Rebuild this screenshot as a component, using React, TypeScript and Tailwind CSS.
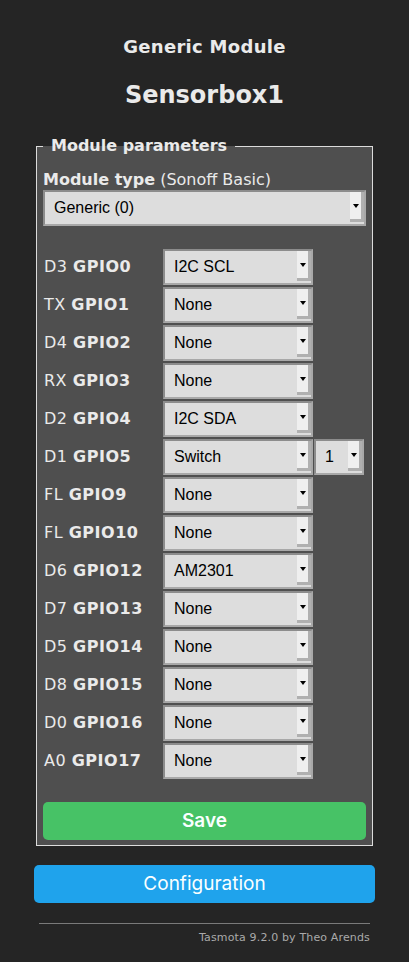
import React from 'react';

const rows: [string, string, string, string?][] = [
  ['D3', 'GPIO0', 'I2C SCL'],
  ['TX', 'GPIO1', 'None'],
  ['D4', 'GPIO2', 'None'],
  ['RX', 'GPIO3', 'None'],
  ['D2', 'GPIO4', 'I2C SDA'],
  ['D1', 'GPIO5', 'Switch', '1'],
  ['FL', 'GPIO9', 'None'],
  ['FL', 'GPIO10', 'None'],
  ['D6', 'GPIO12', 'AM2301'],
  ['D7', 'GPIO13', 'None'],
  ['D5', 'GPIO14', 'None'],
  ['D8', 'GPIO15', 'None'],
  ['D0', 'GPIO16', 'None'],
  ['A0', 'GPIO17', 'None'],
];

function Select({ value, className = '' }: { value: string; className?: string }) {
  return (
    <div
      className={`flex h-[36px] items-stretch border-2 border-t-[#8c8c8c] border-l-[#8c8c8c] border-r-[#a8a8a8] border-b-[#a8a8a8] bg-[#dddddd] text-[16px] text-black font-['Liberation_Sans',Arial,sans-serif] ${className}`}
    >
      <span className="flex flex-1 items-center pl-[9px]">{value}</span>
      <span className="mb-[2px] flex w-[14px] items-center justify-center border-r-[3px] border-b-[3px] border-[#b0b0b0] bg-[#efefef]">
        <span className="h-0 w-0 border-x-[3px] border-t-[4px] border-x-transparent border-t-black" />
      </span>
    </div>
  );
}

export default function App() {
  return (
    <div className="min-h-screen bg-[#252525] pt-[36px] pb-[20px] text-[#eaeaea] font-['DejaVu_Sans',Verdana,sans-serif]">
      <div className="mx-auto w-[341px]">
        <h3 className="text-center text-[18px] font-bold leading-[22px] tracking-[0.3px]">Generic Module</h3>
        <h2 className="mt-[23px] text-center text-[24px] font-bold leading-[28px]">Sensorbox1</h2>

        <fieldset className="mx-[2px] mt-[27px] border border-[#dcdcdc] bg-[#4f4f4f] px-[6px] pb-[5px]">
          <legend className="px-[8px] text-[16px] font-bold leading-[20px]">Module parameters</legend>

          <p className="mt-[14px] text-[16px] leading-[20px]">
            <b>Module type</b> (Sonoff Basic)
          </p>
          <Select value="Generic (0)" />

          <div className="mt-[23px] flex flex-col gap-[2px]">
            {rows.map(([pin, gpio, fn, extra]) => (
              <div key={gpio} className="flex items-center">
                <span className="w-[120px] pl-[1px] text-[16px] leading-[20px] tracking-[0.5px]">
                  {pin} <b>{gpio}</b>
                </span>
                <Select value={fn} className="w-[150px]" />
                {extra && <Select value={extra} className="ml-[1px] w-[50px]" />}
              </div>
            ))}
          </div>

          <button className="mt-[23px] h-[38px] w-full rounded-[5px] bg-[#47c266] text-[19px] font-semibold text-[#faffff] font-['Inter',sans-serif]">
            Save
          </button>
        </fieldset>

        <button className="mt-[19px] h-[38px] w-full rounded-[5px] bg-[#1fa3ec] text-[19px] text-[#faffff] font-['Inter',sans-serif]">
          Configuration
        </button>

        <hr className="mx-[5px] mt-[20px] border-t border-[#7a7a7a]" />
        <p className="mt-[7px] pr-[5px] text-right text-[11px] leading-[14px] tracking-[0.15px] text-[#aaaaaa]">
          Tasmota 9.2.0 by Theo Arends
        </p>
      </div>
    </div>
  );
}
